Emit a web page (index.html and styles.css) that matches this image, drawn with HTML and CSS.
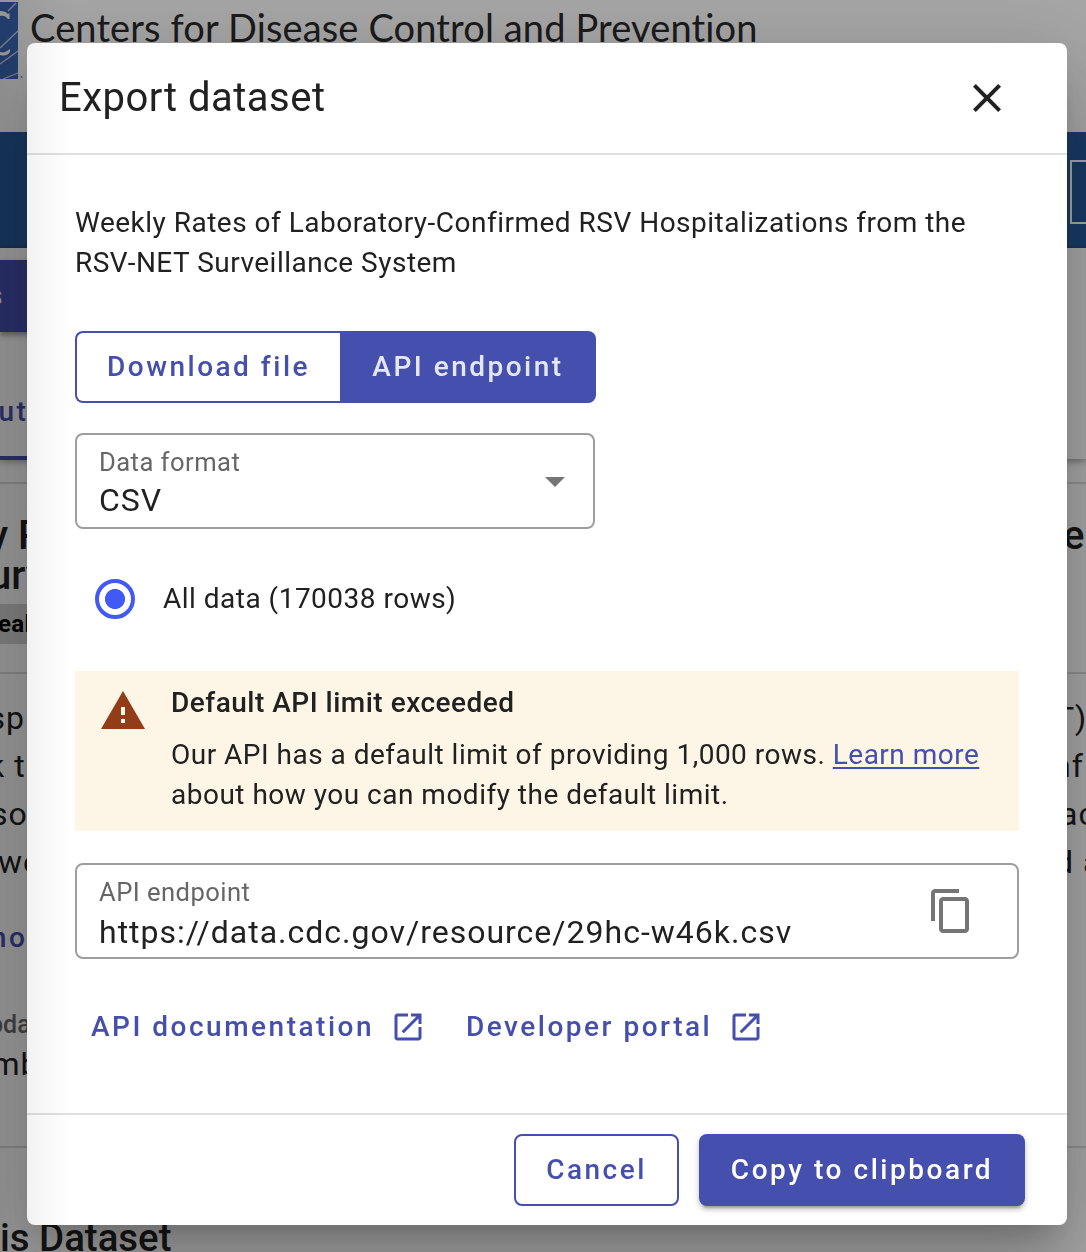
FILE: index.html
```html
<!DOCTYPE html>
<html lang="en">
<head>
<meta charset="utf-8">
<title>Export dataset</title>
<link rel="stylesheet" href="styles.css">
</head>
<body>
<div class="page" aria-hidden="true">
  <header class="site-header">
    <svg class="site-logo" width="24" height="84" viewBox="0 0 24 84">
      <rect x="0" y="2" width="18" height="77" fill="#3b68b8"/>
      <path d="M8 11 16 3M0 48 18 31M0 64 18 51M3 79 18 73" stroke="#c9d3e6" stroke-width="1.300" fill="none"/>
      <path d="M0 11c4 0 6 1 8 3l1.500-1v6H8c-2-3-5-4-8-3zM0 52c4 1 6 0 10-3v3c-3 4-6 4-10 3z" fill="#fff"/>
      <circle cx="21.500" cy="77" r="1" fill="#7d9ace"/>
    </svg>
    <div class="site-name">Centers for Disease Control and Prevention</div>
  </header>
  <div class="band"><div class="band-button"></div></div>
  <div class="tabs">
    <div class="tab-button">s</div>
    <div class="tab">ut</div>
  </div>
  <section class="heading">
    <div class="row title"><span class="l1">y R</span><span class="r1">e</span></div>
    <div class="row title"><span class="l2">urv</span></div>
    <div class="badge">eal</div>
  </section>
  <section class="about">
    <div class="row text"><span class="l3">sp</span><span class="r2">T)</span></div>
    <div class="row text"><span class="l4">k t</span><span class="r3">nf</span></div>
    <div class="row text"><span class="l5">so</span><span class="r4">ac</span></div>
    <div class="row text"><span class="l6">we</span><span class="r5">d a</span></div>
    <div class="more">mo</div>
    <div class="meta-label">pda</div>
    <div class="meta-value">mb</div>
  </section>
  <section class="section-title">is Dataset</section>
</div>

<div class="scrim">
  <div class="dialog" role="dialog" aria-label="Export dataset">
    <header class="dialog-header">
      <h1>Export dataset</h1>
      <svg width="48" height="48" viewBox="0 0 24 24" fill="#212121"><path d="M19 6.410 17.590 5 12 10.590 6.410 5 5 6.410 10.590 12 5 17.590 6.410 19 12 13.410 17.590 19 19 17.590 13.410 12z"/></svg>
    </header>
    <main class="dialog-body">
      <p class="dataset-name">Weekly Rates of Laboratory-Confirmed RSV Hospitalizations from the<br>RSV-NET Surveillance System</p>
      <div class="toggle">
        <button class="toggle-item">Download file</button><button class="toggle-item selected">API endpoint</button>
      </div>
      <div class="field select">
        <div class="field-content">
          <div class="field-label">Data format</div>
          <div class="field-value csv">CSV</div>
        </div>
        <svg class="arrow" width="20" height="10" viewBox="0 0 20 10"><path d="M0 0h20L10 10z" fill="#757575"/></svg>
      </div>
      <label class="radio"><span class="radio-mark"></span>All data (170038 rows)</label>
      <div class="alert">
        <svg width="48" height="48" viewBox="0 0 24 24" fill="#933c18"><path d="M1 21h22L12 2 1 21zm12-3h-2v-2h2v2zm0-4h-2v-4h2v4z"/></svg>
        <div>
          <div class="alert-title">Default API limit exceeded</div>
          <div class="alert-text">Our API has a default limit of providing 1,000 rows. <a href="#">Learn more</a><br>about how you can modify the default limit.</div>
        </div>
      </div>
      <div class="field endpoint">
        <div class="field-content">
          <div class="field-label">API endpoint</div>
          <div class="field-value">https://data.cdc.gov/resource/29hc-w46k.csv</div>
        </div>
        <svg width="48" height="48" viewBox="0 0 24 24" fill="#757575"><path d="M16 1H4c-1.100 0-2 .9-2 2v14h2V3h12V1zm3 4H8c-1.100 0-2 .9-2 2v14c0 1.100.9 2 2 2h11c1.100 0 2-.9 2-2V7c0-1.100-.9-2-2-2zm0 16H8V7h11v14z"/></svg>
      </div>
      <div class="links">
        <a href="#">API documentation<svg width="36" height="36" viewBox="0 0 24 24" fill="#454fae"><path d="M19 19H5V5h7V3H5c-1.110 0-2 .9-2 2v14c0 1.100.89 2 2 2h14c1.100 0 2-.9 2-2v-7h-2v7zM14 3v2h3.590l-9.830 9.830 1.410 1.410L19 6.410V10h2V3h-7z"/></svg></a>
        <a href="#">Developer portal<svg width="36" height="36" viewBox="0 0 24 24" fill="#454fae"><path d="M19 19H5V5h7V3H5c-1.110 0-2 .9-2 2v14c0 1.100.89 2 2 2h14c1.100 0 2-.9 2-2v-7h-2v7zM14 3v2h3.590l-9.830 9.830 1.410 1.410L19 6.410V10h2V3h-7z"/></svg></a>
      </div>
    </main>
    <footer class="dialog-footer">
      <button class="cancel">Cancel</button>
      <button class="copy">Copy to clipboard</button>
    </footer>
  </div>
</div>
<div class="edge-shade"></div>
</body>
</html>
```
FILE: styles.css
```css
* { box-sizing: border-box; }
html, body { height: 100%; }
body {
  margin: 0;
  overflow: hidden;
  background: #fff;
  color: #212121;
  font-family: Roboto, sans-serif;
}
h1, p { margin: 0; font-weight: 400; }
button { margin: 0; font: inherit; color: inherit; white-space: nowrap; }
svg { display: block; flex: none; }

/* page behind the dialog */
.page { height: 1252px; overflow: hidden; white-space: nowrap; }
.site-header { display: flex; height: 132px; }
.site-logo { margin-right: 6px; }
.site-name { font: 38px/54px Lato, sans-serif; letter-spacing: 0.130px; color: #2a2a2a; }
.band { display: flex; justify-content: flex-end; align-items: center; height: 116px; padding-top: 4px; background: #265a9c; }
.band-button { width: 16px; height: 64px; border: 2px solid #fff; border-right: 0; }
.tabs { height: 211px; padding-top: 12px; box-shadow: 0 2px 8px rgba(0, 0, 0, 0.4); }
.tab-button {
  width: 60px; height: 72px;
  background: #454fb1; color: #fff;
  font: 500 28px/72px Roboto, sans-serif; text-indent: -12px;
  box-shadow: 0 3px 6px rgba(0, 0, 0, 0.4);
}
.tab {
  width: 60px; height: 96px; margin-top: 32px;
  border-bottom: 4px solid #454fb1; color: #454fb1;
  font: 500 28px/96px Roboto, sans-serif; letter-spacing: 2.500px; text-indent: -1.500px;
}
.heading { height: 190px; margin-top: 23px; padding-top: 32px; border-top: 2px solid #dcdcdc; }
.row { display: flex; justify-content: space-between; }
.row span { width: 36px; overflow: hidden; }
.title { font: 500 40px/40px Roboto, sans-serif; }
.badge {
  width: 80px; height: 40px; margin-top: 8px;
  background: #d4d4d4; color: #000;
  font: 700 24px/40px Roboto, sans-serif; letter-spacing: 0.300px; text-indent: -2px;
}
.about { height: 474px; padding-top: 20px; border-top: 2px solid #dcdcdc; }
.text { font-size: 32px; line-height: 48px; letter-spacing: 1px; }
.l1 { text-indent: -11.500px; }
.l2 { text-indent: -11px; }
.l3 { text-indent: -11.500px; }
.l4 { text-indent: -12px; }
.l5 { text-indent: -9px; }
.l6 { text-indent: -2px; }
.r1 { text-indent: 13px; }
.r2 { text-indent: 5px; }
.r3 { text-indent: 3px; }
.r4 { text-indent: 10px; }
.r5 { text-indent: 5px; }
.more { margin-top: 32px; font: 500 28px/40px Roboto, sans-serif; letter-spacing: 2.500px; color: #454fb1; text-indent: -18px; }
.meta-label { margin-top: 52px; font: 500 25px/30px Roboto, sans-serif; color: #6c6c6c; text-indent: -11px; }
.meta-value { margin-top: 4px; font-size: 32px; line-height: 40px; letter-spacing: 1px; text-indent: -8.500px; }
.section-title { border-top: 2px solid #dcdcdc; padding-top: 70px; font: 500 38.400px/40px Roboto, sans-serif; }

/* dialog */
.scrim { position: fixed; inset: 0; padding: 43px 19px 27px 27px; background: rgba(0, 0, 0, 0.35); }
.dialog {
  display: flex; flex-direction: column;
  height: 1182px; border-radius: 8px; background: #fff;
  box-shadow: 0 22px 30px -14px rgba(0, 0, 0, 0.2), 0 48px 76px 6px rgba(0, 0, 0, 0.14), 0 18px 92px 16px rgba(0, 0, 0, 0.12);
}
.dialog-header {
  display: flex; justify-content: space-between; align-items: center;
  height: 112px; padding: 0 56px 0 32px; border-bottom: 2px solid #e0e0e0;
}
.dialog-header h1 { font-size: 40px; line-height: 56px; letter-spacing: 0.500px; }
.dialog-body { flex: 1; padding: 48px 48px 0; font-size: 28px; line-height: 40px; letter-spacing: 0.490px; }
.dataset-name { white-space: nowrap; }
.toggle { display: flex; width: 521px; height: 72px; margin-top: 48px; }
.toggle-item {
  width: 265px; padding: 0;
  border: 2px solid #454fae; border-right: 0; border-radius: 8px 0 0 8px;
  background: #fff; color: #454fae;
  font-weight: 500; letter-spacing: 2.500px;
}
.toggle-item.selected { width: 256px; border: 0; border-radius: 0 8px 8px 0; background: #454fae; color: #e5e7f5; }
.field {
  display: flex; justify-content: space-between; align-items: center;
  height: 96px; border: 2px solid #9e9e9e; border-radius: 8px; padding: 0 28px 0 22px;
}
.select { width: 520px; margin-top: 30px; }
.arrow { margin-top: 2px; }
.field-content { align-self: flex-start; padding-top: 11px; }
.field-label { font-size: 25.600px; line-height: 32px; letter-spacing: 0.450px; color: #666; }
.field-value { font-size: 32px; line-height: 40px; letter-spacing: 1px; margin-top: 4px; white-space: nowrap; }
.field-value.csv { margin-top: 2px; }
.radio { display: flex; align-items: center; height: 40px; margin: 50px 0 0 20px; }
.radio-mark { width: 40px; height: 40px; margin-right: 28px; border: 4px solid #425af5; border-radius: 50%; background: radial-gradient(circle, #425af5 9.700px, #fff 10.300px); }
.alert { display: flex; gap: 24px; height: 160px; margin-top: 52px; padding: 12px 24px 0; background: #fdf5e6; }
.alert > svg { margin-top: 4px; }
.alert-title { font-weight: 500; letter-spacing: 0.500px; }
.alert-text { margin-top: 12px; white-space: nowrap; }
.alert-text a { color: #454fae; text-decoration-thickness: 2px; text-underline-offset: 3px; }
.endpoint { margin-top: 32px; padding-right: 42px; }
.links { display: flex; gap: 40px; margin: 48px 0 0 16px; }
.links a { display: flex; align-items: center; color: #454fae; font-weight: 500; letter-spacing: 2.500px; text-decoration: none; }
.links svg { margin-left: 16px; }
.dialog-footer { display: flex; justify-content: flex-end; gap: 20px; height: 112px; padding: 19px 42px 0 0; border-top: 2px solid #e0e0e0; }
.dialog-footer button { height: 72px; padding: 0 0 2px; border-radius: 8px; font-size: 28px; font-weight: 500; }
.cancel { width: 165px; border: 2px solid #454fae; background: #fff; letter-spacing: 2.500px; }
.dialog-footer .cancel { color: #454fae; }
.copy { width: 326px; border: 0; background: #454fae; letter-spacing: 2.550px; box-shadow: 0 6px 2px -4px rgba(0, 0, 0, 0.2), 0 4px 4px rgba(0, 0, 0, 0.14), 0 2px 10px rgba(0, 0, 0, 0.12); }
.dialog-footer .copy { color: #fff; }

/* soft shade along the window's left edge */
.edge-shade {
  position: fixed; inset: 0 auto 0 0; width: 75px; pointer-events: none;
  background: linear-gradient(to right, rgba(0, 0, 0, 0.1), rgba(0, 0, 0, 0.050) 36%, rgba(0, 0, 0, 0.015) 75%, rgba(0, 0, 0, 0));
}
```
